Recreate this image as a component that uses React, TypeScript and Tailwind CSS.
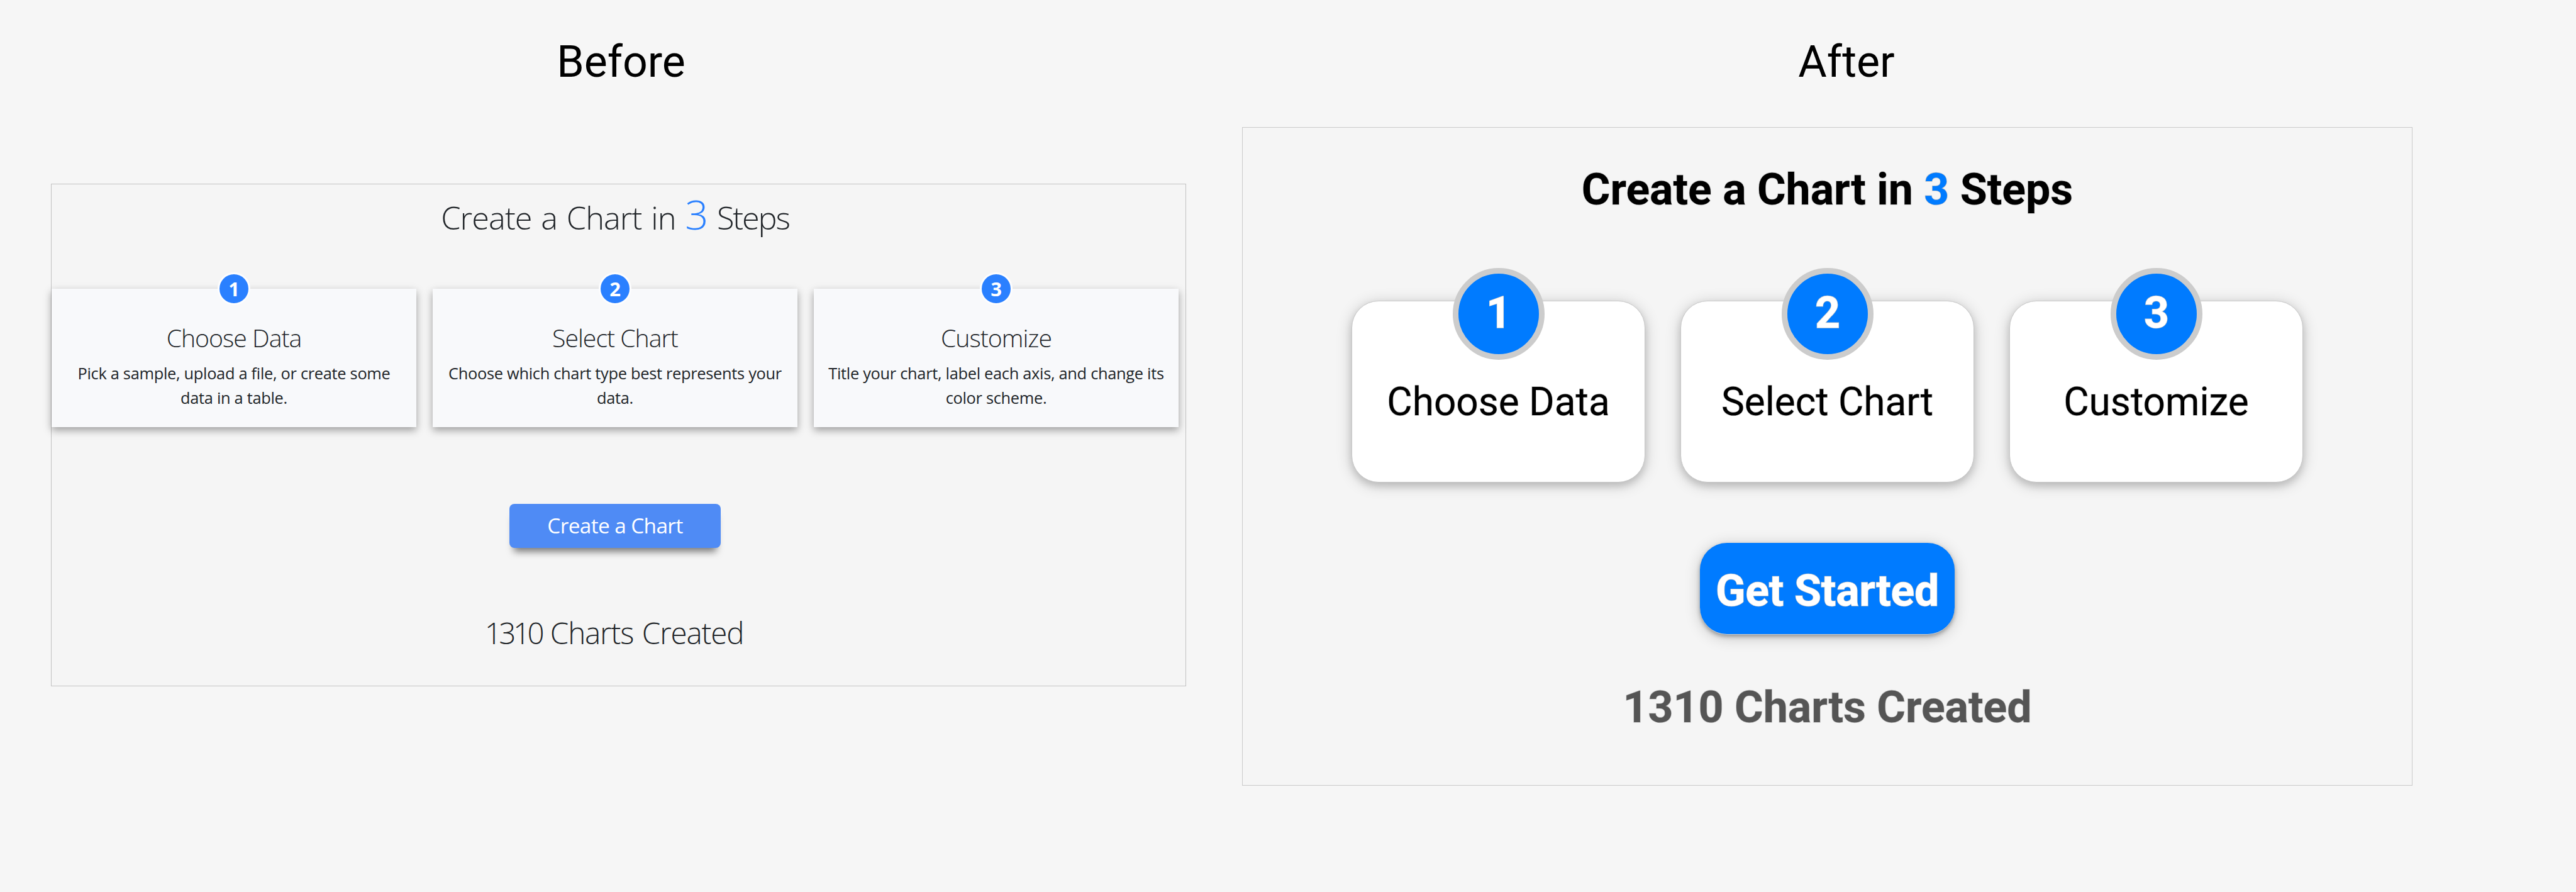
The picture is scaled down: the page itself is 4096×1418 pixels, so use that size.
const steps = [
  { n: 1, title: "Choose Data", lines: ["Pick a sample, upload a file, or create some", "data in a table."] },
  { n: 2, title: "Select Chart", lines: ["Choose which chart type best represents your", "data."] },
  { n: 3, title: "Customize", lines: ["Title your chart, label each axis, and change its", "color scheme."] },
];

function Before() {
  return (
    <section className="w-[1894px]">
      <h1 className="w-[1813px] text-center text-[69.84px] leading-[84px]">Before</h1>
      <div className="mt-[152px] h-[799px] w-[1805px] border border-[#c2c2c2] bg-[#f5f5f5] font-['Open_Sans',sans-serif] text-[#212529]">
        <div className="flex w-[1792px] flex-col items-center pt-3">
          <h2 className="h-[76px] text-[50.5px] font-light leading-[70px] tracking-[-0.95px] [word-spacing:2.5px] whitespace-nowrap">
            Create a Chart in <span className="text-[65px] text-[#2a80ff]">3</span>{" "}
            <span className="tracking-[-2.2px]">Steps</span>
          </h2>
          <div className="mt-[78px] flex gap-[26px]">
            {steps.map((s) => (
              <div
                key={s.n}
                className="relative h-[220px] w-[580px] bg-[#f8f9fb] pt-[54px] text-center shadow-[0_5px_12px_rgba(0,0,0,0.36)]"
              >
                <div className="absolute -top-[26px] left-[264px] flex size-[52px] items-center justify-center rounded-full border-3 border-[#fdfdfe] bg-[#2a80ff] text-[31px] font-bold leading-none text-white">
                  {s.n}
                </div>
                <h3 className="text-[39.2px] font-light leading-[48px] tracking-[-1px]">{s.title}</h3>
                <p className="mt-[13px] text-[25.4px] leading-[38.8px] tracking-[-0.3px] whitespace-nowrap">
                  {s.lines[0]}
                  <br />
                  {s.lines[1]}
                </p>
              </div>
            ))}
          </div>
          <button className="mt-[122px] h-[70px] w-[336px] rounded-lg bg-[#4f8bf5] pb-[2px] text-[33.4px] leading-[68px] tracking-[-0.63px] text-white shadow-[0_13px_12px_-7px_rgba(0,0,0,0.5)]">
            Create a Chart
          </button>
          <p className="mt-[102px] pr-[3px] text-[47.5px] font-light leading-[66px] tracking-[-1.15px] [word-spacing:2.5px]">
            <span className="tracking-[-4.5px]">1310</span> Charts Created
          </p>
        </div>
      </div>
    </section>
  );
}

function After() {
  return (
    <section className="w-[1922px]">
      <h1 className="w-[1922px] text-center text-[69.84px] leading-[84px]">After</h1>
      <div className="mt-[62px] flex h-[1047px] w-[1861px] flex-col items-center border border-[#cacaca] bg-[#f5f5f5] pt-14 [-webkit-text-stroke:1.4px_#c6c6c6] [paint-order:stroke_fill]">
        <h2 className="text-[69.84px] font-bold leading-[84px]">
          Create a Chart in <span className="text-[#007bff]">3</span> Steps
        </h2>
        <div className="mt-[135px] flex gap-[56px]">
          {steps.map((s) => (
            <div
              key={s.n}
              className="relative h-[289px] w-[467px] rounded-[43px] border border-[#c8c8c8] bg-white pt-[123px] text-center shadow-[0_6px_12px_rgba(0,0,0,0.12),0_4px_24px_rgba(0,0,0,0.2)]"
            >
              <div className="absolute -top-[53px] left-[160px] size-[146px] rounded-full border-9 border-[#ccc] bg-[#007bff] text-[69.84px] font-bold leading-[124px] text-white">
                {s.n}
              </div>
              <h3 className="text-[62.08px] leading-[74px]">{s.title}</h3>
            </div>
          ))}
        </div>
        <button className="mt-[96px] h-[146px] w-[405px] rounded-[43px] border-b border-[#ccc] bg-[#007bff] pt-[6px] text-[69.84px] font-bold leading-[138px] tracking-[-0.3px] text-white shadow-[0_3px_6px_rgba(0,0,0,0.3),0_4px_24px_rgba(0,0,0,0.2)]">
          Get Started
        </button>
        <p className="mt-[73px] text-[69.84px] font-bold leading-[84px] text-[#555]">1310 Charts Created</p>
      </div>
    </section>
  );
}

export default function App() {
  return (
    <main className="flex h-[1418px] w-[4096px] overflow-hidden bg-[#f6f6f6] pt-14 pl-[81px] font-[Roboto,sans-serif] text-black">
      <Before />
      <After />
    </main>
  );
}
